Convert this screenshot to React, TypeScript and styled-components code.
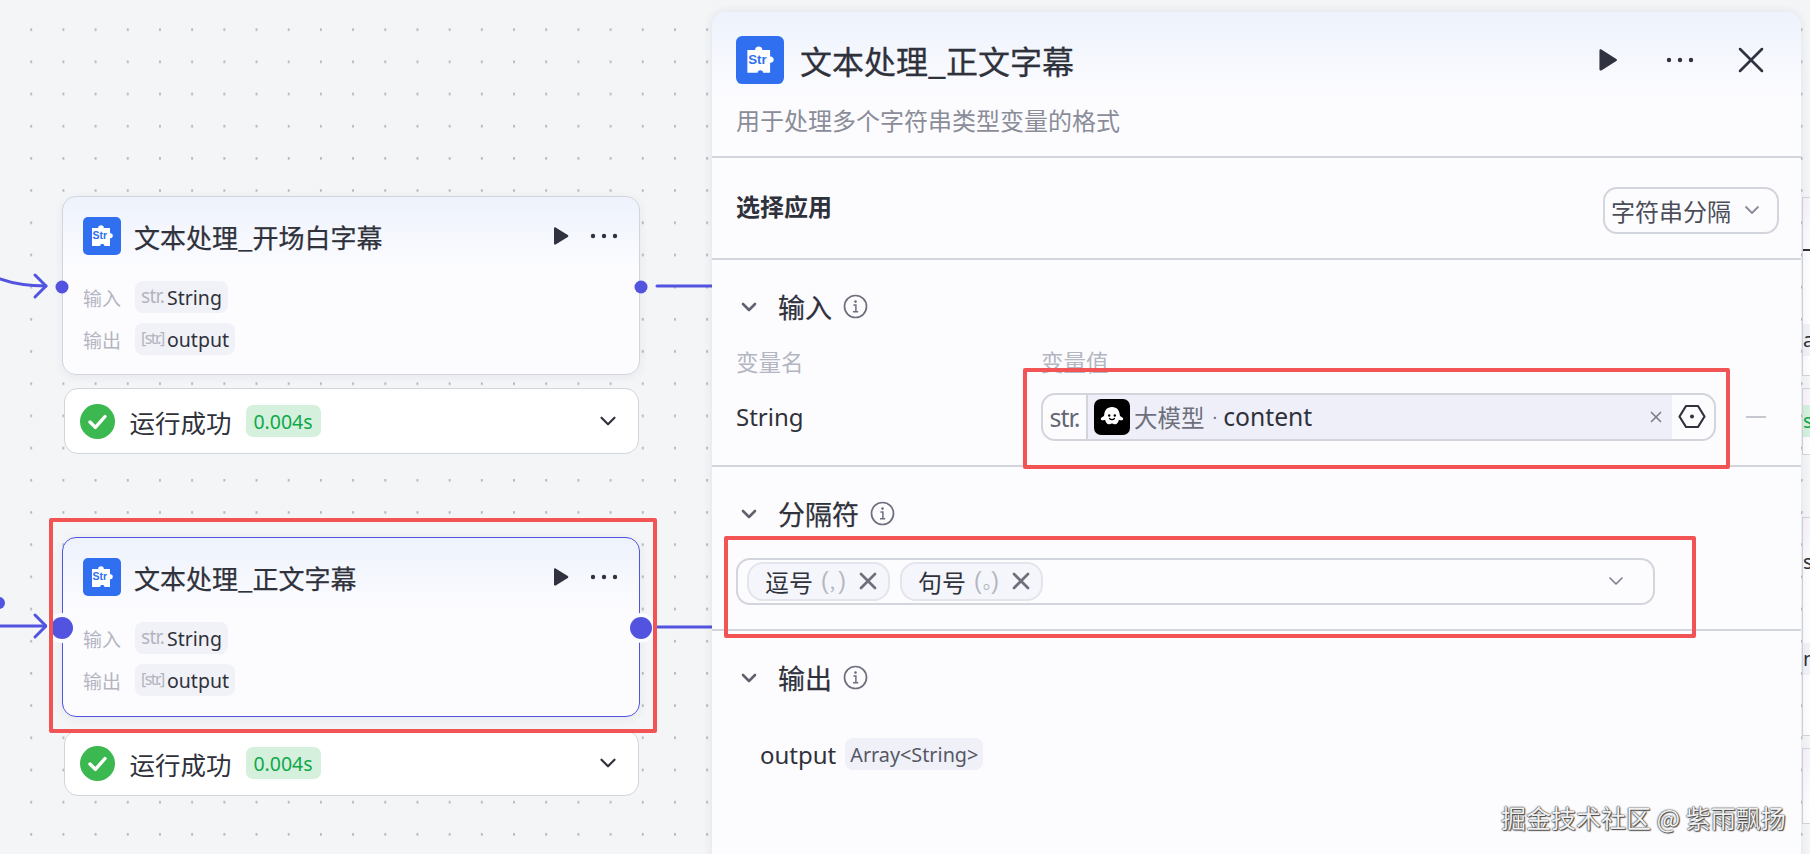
import styled, { createGlobalStyle } from "styled-components";
import { ChevronDown, X } from "lucide-react";

const ink = "#2f313b";
const muted = "#b3b5c0";
const line = "#d3d5dd";
const accent = "#5254e0";

const GlobalStyle = createGlobalStyle`
  html, body {
    margin: 0;
    height: 100%;
    overflow: hidden;
  }
  body {
    font-family: "Noto Sans", "Noto Sans CJK SC", sans-serif;
    color: ${ink};
  }
`;

const Canvas = styled.div`
  position: relative;
  width: 1810px;
  height: 854px;
  overflow: hidden;
  background-color: #f4f5f7;
  background-image: radial-gradient(circle at 31.2px 29.7px, #b4b7bf 1px, transparent 1.4px);
  background-size: 32.2px 32.2px;
`;

const Edges = styled.svg`
  position: absolute;
  inset: 0;
`;

const NodeGroup = styled.div<{ $top: number }>`
  position: absolute;
  left: 62px;
  top: ${(p) => p.$top}px;
  width: 578px;
  display: flex;
  flex-direction: column;
  align-items: center;
  gap: 13px;
`;

const Node = styled.div<{ $selected?: boolean }>`
  position: relative;
  box-sizing: border-box;
  width: 100%;
  height: ${(p) => (p.$selected ? 180 : 179)}px;
  padding: 20px 21px 0 20px;
  border: 1.5px solid ${(p) => (p.$selected ? accent : line)};
  border-radius: 14px;
  background: linear-gradient(#edf2fc 0, #fcfcff 70px);
  box-shadow: 0 2px 10px rgba(40, 50, 80, 0.07);
`;

const NodeHeader = styled.div`
  display: flex;
  align-items: center;
  height: 38px;
  margin-bottom: 26px;
`;

const NodeTitle = styled.div`
  flex: 1;
  margin-left: 13px;
  font-family: "Noto Sans CJK SC", sans-serif;
  font-size: 26px;
  font-weight: 400;
  -webkit-text-stroke: 0.25px ${ink};
  white-space: nowrap;
`;

const NodeRow = styled.div`
  display: flex;
  align-items: center;
  height: 32px;
  margin-bottom: 10px;
`;

const RowLabel = styled.span`
  width: 52px;
  font-family: "Noto Sans CJK SC", sans-serif;
  font-size: 19px;
  color: ${muted};
`;

const TypeBadge = styled.span`
  display: inline-flex;
  align-items: center;
  height: 32px;
  padding: 0 6px;
  border-radius: 8px;
  background: #f1f2f8;
  font-size: 19.5px;
`;

const TypeHint = styled.span<{ $small?: boolean }>`
  width: 26px;
  margin-bottom: 3px;
  font-size: ${(p) => (p.$small ? 16 : 19)}px;
  letter-spacing: ${(p) => (p.$small ? -1.6 : -0.7)}px;
  white-space: nowrap;
  color: ${muted};
`;

const Port = styled.span<{ $side: "left" | "right"; $large?: boolean }>`
  position: absolute;
  top: 90px;
  ${(p) => p.$side}: -1.5px;
  transform: translate(${(p) => (p.$side === "left" ? "-50%" : "50%")}, -50%);
  width: ${(p) => (p.$large ? 22 : 13)}px;
  height: ${(p) => (p.$large ? 22 : 13)}px;
  border-radius: 50%;
  background: ${accent};
  box-shadow: ${(p) => (p.$large ? "0 0 0 4px #fcfcff" : "none")};
`;

const NodePlay = styled.span`
  display: flex;
  margin-right: 21px;
`;

const Status = styled.div`
  box-sizing: border-box;
  display: flex;
  align-items: center;
  width: 575px;
  height: 66px;
  padding: 0 17px 0 15px;
  border: 1.5px solid ${line};
  border-radius: 14px;
  background: #fff;
`;

const StatusText = styled.span`
  margin-left: 15px;
  font-family: "Noto Sans CJK SC", sans-serif;
  font-size: 25.5px;
`;

const Duration = styled.span`
  display: inline-flex;
  align-items: center;
  justify-content: center;
  width: 75px;
  height: 32px;
  margin-left: 14px;
  margin-right: auto;
  border-radius: 7px;
  background: #d5f1dd;
  color: #0fa84a;
  font-size: 19.5px;
`;

const PlayBox = styled.svg`
  flex: none;
`;

const Panel = styled.div`
  position: absolute;
  left: 712px;
  top: 12px;
  right: 9px;
  bottom: -20px;
  border-radius: 14px 14px 0 0;
  background: linear-gradient(#edf2fc 0, #fcfcff 84px);
  box-shadow: 0 0 10px rgba(40, 50, 80, 0.1);
`;

const PanelHead = styled.header`
  box-sizing: border-box;
  height: 146px;
  padding: 24px 28px 0 24px;
  border-bottom: 2px solid ${line};
`;

const PanelTitleRow = styled.div`
  display: flex;
  align-items: center;
  height: 48px;
`;

const PanelTitle = styled.h1`
  flex: 1;
  margin: 0 0 0 16px;
  font-family: "Noto Sans CJK SC", sans-serif;
  font-size: 32px;
  font-weight: 400;
  -webkit-text-stroke: 0.3px ${ink};
`;

const PanelActions = styled.div`
  display: flex;
  align-items: center;
  gap: 35px;
`;

const PanelPlay = styled.span`
  display: flex;
  margin-right: 13px;
`;

const Description = styled.p`
  margin: 18px 0 0;
  font-family: "Noto Sans CJK SC", sans-serif;
  font-size: 24px;
  line-height: 36px;
  color: #8a8c98;
`;

const AppRow = styled.section`
  box-sizing: border-box;
  display: flex;
  align-items: center;
  justify-content: space-between;
  height: 102px;
  padding: 0 22px 0 24px;
  border-bottom: 2px solid ${line};
`;

const AppLabel = styled.span`
  margin-bottom: 6px;
  font-family: "Noto Sans CJK SC", sans-serif;
  font-size: 24px;
  font-weight: 700;
`;

const AppSelect = styled.div`
  box-sizing: border-box;
  display: flex;
  align-items: center;
  gap: 9px;
  width: 176px;
  height: 47px;
  margin-top: 4px;
  padding-left: 6px;
  border: 2px solid ${line};
  border-radius: 14px;
  font-family: "Noto Sans CJK SC", sans-serif;
  font-size: 24px;
  color: #4b4d58;
`;

const Section = styled.section<{ $height?: number }>`
  box-sizing: border-box;
  ${(p) => (p.$height ? `height: ${p.$height}px;` : "")}
  padding: 28.5px 0 0 24px;
  ${(p) => (p.$height ? `border-bottom: 2px solid ${line};` : "")}
`;

const SectionHead = styled.div`
  display: flex;
  align-items: center;
  height: 36px;
  padding-left: 1px;
`;

const SectionTitle = styled.h2`
  margin: 0 11px 0 17px;
  font-family: "Noto Sans CJK SC", sans-serif;
  font-size: 27px;
  font-weight: 400;
  -webkit-text-stroke: 0.25px ${ink};
`;

const VarGrid = styled.div`
  display: grid;
  grid-template-columns: 305px 675px 1fr;
  align-items: center;
  margin-top: 21px;
  row-gap: 17px;
`;

const ColumnLabel = styled.span`
  font-family: "Noto Sans CJK SC", sans-serif;
  font-size: 22.5px;
  line-height: 30px;
  color: ${muted};
`;

const VarName = styled.span`
  font-size: 24px;
`;

const RefInput = styled.div`
  box-sizing: border-box;
  display: flex;
  align-items: stretch;
  height: 48px;
  border: 2px solid ${line};
  border-radius: 14px;
  overflow: hidden;
`;

const RefType = styled.span`
  display: flex;
  align-items: center;
  justify-content: center;
  box-sizing: border-box;
  width: 45px;
  border-right: 2px solid ${line};
  font-size: 25px;
  letter-spacing: -1px;
  color: #646772;
`;

const RefTag = styled.div`
  flex: 1;
  display: flex;
  align-items: center;
  padding: 0 7px 0 6px;
  background: #eeeff8;
`;

const RefSource = styled.span`
  margin-left: 4px;
  font-family: "Noto Sans CJK SC", sans-serif;
  font-size: 23.5px;
  color: #6d6f7c;
`;

const RefDot = styled.span`
  margin: 0 5px 0 7px;
  font-family: "Liberation Sans", sans-serif;
  font-size: 20px;
  color: #6d6f7c;
`;

const RefField = styled.span`
  flex: 1;
  font-size: 24.7px;
`;

const RefAction = styled.span`
  display: flex;
  align-items: center;
  justify-content: center;
  width: 42px;
  padding-right: 3px;
  box-sizing: border-box;
`;

const RemoveRow = styled.span`
  width: 20px;
  height: 2px;
  margin-left: 30px;
  background: #c6c8d1;
`;

const TagSelect = styled.div`
  box-sizing: border-box;
  display: flex;
  align-items: center;
  gap: 10px;
  width: 919px;
  height: 47px;
  margin-top: 26px;
  padding: 0 25px 0 9px;
  border: 2px solid ${line};
  border-radius: 14px;
`;

const Tag = styled.span`
  box-sizing: border-box;
  display: inline-flex;
  align-items: center;
  width: 143px;
  height: 39px;
  padding-left: 16px;
  border: 2px solid #e3e4ec;
  border-radius: 16px;
  background: #f5f6fb;
  font-family: "Noto Sans CJK SC", sans-serif;
  font-size: 24px;
`;

const TagHint = styled.span`
  margin: 0 0 0 8px;
  font-family: "Liberation Sans", sans-serif;
  font-size: 23px;
  font-weight: 400;
  letter-spacing: 1px;
  color: #b4b6c0;
  white-space: nowrap;
`;

const TagMark = styled.span`
  display: inline-block;
  width: 0.45em;
  font-family: "Noto Sans CJK SC", sans-serif;
  font-size: 19px;
  letter-spacing: 0;
`;

const TagClose = styled.span`
  display: flex;
  margin-left: 7px;
`;

const OutputRow = styled.div`
  display: flex;
  align-items: center;
  gap: 9px;
  margin: 42px 0 0 24px;
  font-size: 24px;
`;

const OutputType = styled.span`
  display: inline-flex;
  align-items: center;
  height: 32px;
  padding: 0 5px;
  border-radius: 8px;
  background: #eff0f8;
  font-size: 19.8px;
  color: #565864;
`;

const Mark = styled.div<{ $left: number; $top: number; $width: number; $height: number }>`
  position: absolute;
  box-sizing: border-box;
  left: ${(p) => p.$left}px;
  top: ${(p) => p.$top}px;
  width: ${(p) => p.$width}px;
  height: ${(p) => p.$height}px;
  border: 4px solid #f25354;
  border-radius: 2px;
  pointer-events: none;
`;

const Watermark = styled.div`
  position: absolute;
  left: 1501px;
  top: 799px;
  font-family: "Noto Sans CJK SC", sans-serif;
  font-size: 25px;
  line-height: 36px;
  white-space: nowrap;
  color: #f1f1f1;
  text-shadow: 0 0 2px #333, 0 0 1px #333, 1px 1px 1px #555;
`;

const Peek = styled.div<{ $top: number; $height: number }>`
  position: absolute;
  left: 1802px;
  top: ${(p) => p.$top}px;
  width: 20px;
  height: ${(p) => p.$height}px;
  border: 1.5px solid ${line};
  border-right: none;
  background: linear-gradient(#f8f1fb 0, #fdfdff 60px);
  overflow: hidden;
`;

const PeekText = styled.span<{ $top: number; $green?: boolean; $tint?: boolean }>`
  position: absolute;
  left: 0;
  top: ${(p) => p.$top}px;
  width: 20px;
  height: 32px;
  line-height: 32px;
  font-size: 20px;
  color: ${(p) => (p.$green ? "#0fa84a" : ink)};
  background: ${(p) => (p.$green ? "#d5f1dd" : p.$tint ? "#f1f2f8" : "transparent")};
`;

const PeekDash = styled.span`
  position: absolute;
  left: 0;
  top: 51px;
  width: 10px;
  height: 2px;
  background: ${ink};
`;

function PluginIcon({ size }: { size: number }) {
  return (
    <svg width={size} height={size} viewBox="0 0 38 38">
      <rect width="38" height="38" rx="5" fill="#2f6ff0" />
      <path
        d="M9 11h6.2c-.5-3.6 6.1-3.6 5.6 0H27v5.2c3.8-.4 3.8 5.4 0 5V29h-5.6c.4-2.6-4.6-2.6-4.2 0H9z"
        fill="#fff"
      />
      <text x="9.6" y="22.2" fontFamily="Liberation Sans, sans-serif" fontSize="10.5" fontWeight="700" fill="#2f6ff0">
        Str
      </text>
    </svg>
  );
}

function Play({ width, height }: { width: number; height: number }) {
  return (
    <PlayBox width={width} height={height} viewBox="0 0 16 18">
      <path d="M1 1.400c0-.9.9-1.400 1.600-.9l12.200 7.600c.7.4.7 1.400 0 1.800L2.600 17.500c-.7.4-1.600-.1-1.600-.9z" fill="#30333f" />
    </PlayBox>
  );
}

function Dots({ gap = 11 }: { gap?: number }) {
  const w = gap * 2 + 6;
  return (
    <svg width={w} height="6" viewBox={`0 0 ${w} 6`}>
      {[3, 3 + gap, 3 + gap * 2].map((cx) => (
        <circle key={cx} cx={cx} cy="3" r="2.2" fill="#30333f" />
      ))}
    </svg>
  );
}

function CheckCircle() {
  return (
    <svg width="35" height="35" viewBox="0 0 35 35">
      <circle cx="17.500" cy="17.500" r="17.500" fill="#3bb84f" />
      <path d="M10 18l5.400 5.400L25 12.500" fill="none" stroke="#fff" strokeWidth="3.4" strokeLinecap="round" strokeLinejoin="round" />
    </svg>
  );
}

function Info() {
  return (
    <svg width="25" height="25" viewBox="0 0 25 25">
      <circle cx="12.500" cy="12.500" r="11" fill="none" stroke="#6d6f7c" strokeWidth="1.700" />
      <circle cx="12.500" cy="7.600" r="1.300" fill="#6d6f7c" />
      <path d="M10.400 11h2.500v6.500M10 17.800h5.200" fill="none" stroke="#6d6f7c" strokeWidth="1.500" />
    </svg>
  );
}

function Ghost() {
  return (
    <svg width="36" height="36" viewBox="0 0 36 36" style={{ flex: "none" }}>
      <rect width="36" height="36" rx="7" fill="#000" />
      <path
        d="M18 8c5 0 7.600 3.600 7.800 8 .2 1.400 1.500 1.800 2.600 2.400 1.300.8 1 2.600-.5 2.900-1 .2-2-.1-3-.5-.6 2.300-1.500 4.200-3.400 4.500-1.100.2-1.700-.8-3.500-.8s-2.400 1-3.500.8c-1.900-.3-2.800-2.200-3.400-4.500-1 .4-2 .7-3 .5-1.500-.3-1.800-2.100-.5-2.900 1.100-.6 2.400-1 2.600-2.400C10.400 11.600 13 8 18 8z"
        fill="#fff"
      />
      <circle cx="15.200" cy="16.500" r="1.200" fill="#000" />
      <circle cx="20.800" cy="16.500" r="1.200" fill="#000" />
      <path d="M15.600 19.500c1.200 1.500 3.600 1.500 4.800 0" fill="none" stroke="#000" strokeWidth="1.300" strokeLinecap="round" />
    </svg>
  );
}

function Hexagon() {
  return (
    <svg width="28" height="25" viewBox="0 0 28 25">
      <path d="M8 2h12l6.500 10.500L20 23H8L1.500 12.500z" fill="none" stroke="#30333f" strokeWidth="2.200" strokeLinejoin="round" />
      <circle cx="14" cy="12.500" r="2" fill="#30333f" />
    </svg>
  );
}

function FlowNode(props: { title: string; top: number; selected?: boolean }) {
  const { title, top, selected } = props;
  return (
    <NodeGroup $top={top}>
      <Node $selected={selected}>
        <Port $side="left" $large={selected} />
        <Port $side="right" $large={selected} />
        <NodeHeader>
          <PluginIcon size={38} />
          <NodeTitle>{title}</NodeTitle>
          <NodePlay>
            <Play width={16} height={18} />
          </NodePlay>
          <Dots />
        </NodeHeader>
        <NodeRow>
          <RowLabel>输入</RowLabel>
          <TypeBadge>
            <TypeHint>str.</TypeHint>String
          </TypeBadge>
        </NodeRow>
        <NodeRow>
          <RowLabel>输出</RowLabel>
          <TypeBadge>
            <TypeHint $small>[str.]</TypeHint>output
          </TypeBadge>
        </NodeRow>
      </Node>
      <Status>
        <CheckCircle />
        <StatusText>运行成功</StatusText>
        <Duration>0.004s</Duration>
        <ChevronDown size={26} strokeWidth={2} color="#2f313b" />
      </Status>
    </NodeGroup>
  );
}

function SectionHeading({ title }: { title: string }) {
  return (
    <SectionHead>
      <ChevronDown size={24} strokeWidth={2.6} color="#5f626e" />
      <SectionTitle>{title}</SectionTitle>
      <Info />
    </SectionHead>
  );
}

export default function App() {
  return (
    <Canvas>
      <GlobalStyle />
      <Edges width="1810" height="854" viewBox="0 0 1810 854">
        <g fill="none" stroke={accent} strokeWidth="3" strokeLinecap="round" strokeLinejoin="round">
          <path d="M0 279C14 284 28 286 46 286" />
          <path d="M35 275L46 286L35 297" />
          <path d="M657 286H712" />
          <path d="M0 626H46" />
          <path d="M35 615L46 626L35 637" />
          <path d="M657 627H712" />
        </g>
        <circle cx="-1" cy="603" r="6" fill={accent} />
      </Edges>

      <FlowNode title="文本处理_开场白字幕" top={196} />
      <FlowNode title="文本处理_正文字幕" top={537} selected />

      <Peek $top={197} $height={177}>
        <PeekDash />
        <PeekText $top={126} $tint>a</PeekText>
      </Peek>
      <Peek $top={388} $height={65}>
        <PeekText $top={16} $green>s</PeekText>
      </Peek>
      <Peek $top={517} $height={217}>
        <PeekText $top={28}>s</PeekText>
        <PeekText $top={125} $tint>n</PeekText>
      </Peek>
      <Peek $top={748} $height={74} />

      <Panel>
        <PanelHead>
          <PanelTitleRow>
            <PluginIcon size={48} />
            <PanelTitle>文本处理_正文字幕</PanelTitle>
            <PanelActions>
              <PanelPlay>
                <Play width={20} height={22} />
              </PanelPlay>
              <Dots />
              <X size={44} strokeWidth={1.4} color="#30333f" />
            </PanelActions>
          </PanelTitleRow>
          <Description>用于处理多个字符串类型变量的格式</Description>
        </PanelHead>

        <AppRow>
          <AppLabel>选择应用</AppLabel>
          <AppSelect>
            字符串分隔
            <ChevronDown size={24} strokeWidth={1.8} color="#8a8c98" />
          </AppSelect>
        </AppRow>

        <Section $height={207}>
          <SectionHeading title="输入" />
          <VarGrid>
            <ColumnLabel>变量名</ColumnLabel>
            <ColumnLabel>变量值</ColumnLabel>
            <span />
            <VarName>String</VarName>
            <RefInput>
              <RefType>str.</RefType>
              <RefTag>
                <Ghost />
                <RefSource>大模型</RefSource>
                <RefDot>·</RefDot>
                <RefField>content</RefField>
                <X size={18} strokeWidth={2.2} color="#7c7f8b" />
              </RefTag>
              <RefAction>
                <Hexagon />
              </RefAction>
            </RefInput>
            <RemoveRow />
          </VarGrid>
        </Section>

        <Section $height={164}>
          <SectionHeading title="分隔符" />
          <TagSelect>
            <Tag>
              逗号
              <TagHint>
                (<TagMark>,</TagMark>)
              </TagHint>
              <TagClose>
                <X size={28} strokeWidth={2.3} color="#6d6f7c" />
              </TagClose>
            </Tag>
            <Tag>
              句号
              <TagHint>
                (<TagMark>。</TagMark>)
              </TagHint>
              <TagClose>
                <X size={28} strokeWidth={2.3} color="#6d6f7c" />
              </TagClose>
            </Tag>
            <ChevronDown size={24} strokeWidth={1.6} color="#7c7f8b" style={{ marginLeft: "auto" }} />
          </TagSelect>
        </Section>

        <Section>
          <SectionHeading title="输出" />
          <OutputRow>
            output
            <OutputType>{"Array<String>"}</OutputType>
          </OutputRow>
        </Section>
      </Panel>

      <Mark $left={49} $top={518} $width={608} $height={215} />
      <Mark $left={1023} $top={368} $width={707} $height={101} />
      <Mark $left={724} $top={536} $width={972} $height={102} />
      <Watermark>掘金技术社区 @ 紫雨飘扬</Watermark>
    </Canvas>
  );
}
